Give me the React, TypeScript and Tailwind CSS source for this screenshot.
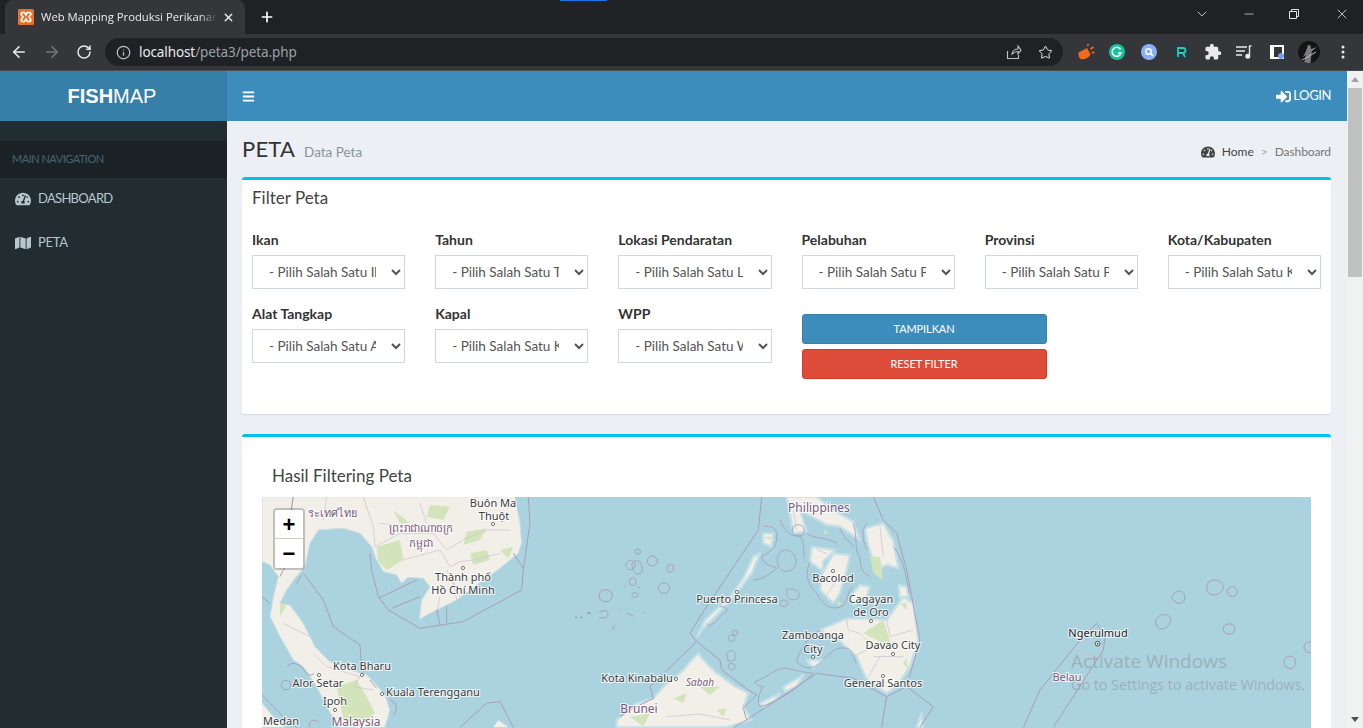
import React from "react";
import { ArrowLeft, ArrowRight, RotateCw, Info, Star, Plus, X, Minus, ChevronDown } from "lucide-react";
import { FaBars, FaMap, FaTachometerAlt, FaSignInAlt } from "react-icons/fa";
import { MdExtension } from "react-icons/md";

const Ctl = ({ label, opt }: { label: string; opt: string }) => (
  <div className="flex flex-col">
    <label className="text-[14px] leading-[20px] font-bold text-[#333] mb-[5px]">{label}</label>
    <select className="h-[34px] w-full border border-[#d2d6de] bg-white pl-[12px] pr-[12px] text-[13.5px] text-[#555] outline-none text-center" defaultValue={opt}>
      <option>{opt}</option>
    </select>
  </div>
);

const Lbl = ({ x, y, t, c = "#3c3c3c", s = 11, i = false }: { x: number; y: number; t: string; c?: string; s?: number; i?: boolean }) => (
  <text x={x} y={y} textAnchor="middle" dominantBaseline="middle" fontSize={s} fontStyle={i ? "italic" : "normal"} fill={c} stroke="#ffffff" strokeOpacity={0.75} strokeWidth={2.2} className="[paint-order:stroke] [font-family:'Noto_Sans','Noto_Sans_CJK_SC',sans-serif]">{t}</text>
);

const B = "#a99cba";
const A = "#cdbccb";

function MapArt() {
  return (
    <svg viewBox="262 497 1049 231" className="block w-[1049px] h-[231px] bg-[#aad3df]">
      <g transform="translate(260 490) scale(0.3333)" fill="none" strokeLinejoin="round" className="blur-[0.45px]">
        <path fill="#f2efe9" stroke="#c6dde2" strokeWidth="3" d="M6,20 L765,20 L780,100 L785,160 L775,190 L720,235 L650,285 L590,330 L510,370 L478,388 L485,330 L510,290 L490,265 L445,262 L425,280 L410,255 L370,245 L345,200 L335,170 L300,130 L250,115 L175,120 L150,160 L135,230 L105,265 L80,300 L60,340 L90,345 L130,400 L165,470 L210,515 L270,540 L320,555 L345,580 L375,615 L390,660 L375,712 L240,712 L205,660 L170,590 L130,530 L100,510 L60,440 L30,380 L40,320 L55,260 L30,225 L6,215Z" />
        <path fill="#f2efe9" d="M6,640 L40,680 L75,712 L6,712Z M700,712 L715,690 L745,712Z" />
        <path fill="#d3e4bb" d="M350,170 L420,150 L430,210 L380,240 L355,215Z M510,45 L570,50 L550,90 L500,80Z M620,125 L680,115 L660,150 L610,165Z M630,190 L680,180 L690,210 L640,225Z M720,180 L760,170 L745,205Z M230,590 L290,570 L320,620 L345,670 L300,712 L250,690Z M60,340 L80,345 L60,380Z M400,60 L450,100 L420,100Z" />
        <path stroke={A} strokeWidth="2" d="M310,20 L340,110 L345,170 L420,130 L520,130 L560,180 L610,150 L680,120 L750,120 M430,210 L540,180 L570,230 L600,215 M100,20 L90,100 L130,120 M60,240 L90,140 L100,60 M600,215 L640,210 L720,190 M200,20 L190,90 M480,40 L500,100 M160,490 L200,530 L300,560 L280,590 L340,600 M110,270 L190,350 M70,400 L150,440 M360,100 L470,110 M560,240 L600,320 M530,370 L540,320 M590,330 L580,270" />
        <path stroke={B} strokeWidth="3" d="M130,250 L190,330 L220,410 L300,465 L305,540 M330,190 L335,240 L355,320 L385,360 L480,415 L610,395 L785,300 L790,240 L810,100 L805,20 M355,325 L470,270 M395,355 L480,320 M540,405 L530,360 M560,400 L560,350 M6,615 L80,690 L110,712 M600,712 L680,640 L720,635 L760,712 M760,190 L790,235 M6,320 L30,340 M110,280 L125,255 M100,20 L95,50 L75,230 L60,260" />
        <path stroke={B} strokeWidth="3" d="M64,585 a14,14 0 1,0 28,0 a14,14 0 1,0 -28,0 M1017,317 a20,18 0 1,1 40,0 a20,18 0 1,1 -40,0 M1018,367 c20,-10 30,-5 25,10 c-5,8 -15,8 -25,5 M82,530 c15,-20 40,-5 50,10 c10,15 20,20 30,10 M150,712 c-10,-15 15,-30 25,-15 M330,570 l20,25 M390,630 c20,5 25,30 10,45 M1058,420 l6,-14" />
        <path fill="#9c8fb0" d="M945,380 h6 v4 h-6Z M962,380 h6 v4 h-6Z M982,367 h10 v4 h-10Z" />
      </g>
      <g transform="translate(620 490) scale(0.3333)" fill="none" strokeLinejoin="round" className="blur-[0.45px]">
        <path stroke="#c4e0e6" strokeWidth="7" fill="#f2efe9" d="M-10,690 L50,640 L100,625 L130,590 L190,540 L215,510 L235,490 L250,510 L285,545 L340,585 L385,610 L370,650 L395,690 L320,712 L-10,712Z" />
        <path stroke="#c4e0e6" strokeWidth="7" fill="#f2efe9" d="M232,440 L255,390 L330,320 L370,265 L400,200 L420,190 L395,250 L350,310 L290,375 L245,420Z M428,130 L460,130 L455,170 L430,160Z" />
        <path stroke="#c4e0e6" strokeWidth="7" fill="#f2efe9" d="M500,20 L520,130 L560,125 L540,60 L620,105 L660,110 L720,150 L700,95 L640,60 L590,20Z M575,170 L645,180 L610,215 L600,300 L640,340 L660,310 L680,240 L690,195 L640,190 L610,245 L570,215Z M735,115 L790,100 L820,150 L835,235 L800,225 L770,240 L745,170Z M690,320 L720,285 L750,290 L740,320 L700,345Z M835,285 L860,290 L865,320 L840,325Z" />
        <path stroke="#c4e0e6" strokeWidth="7" fill="#f2efe9" d="M600,420 L680,385 L750,385 L800,390 L850,320 L880,340 L895,450 L870,530 L830,590 L800,610 L740,570 L710,500 L655,450Z M560,510 L610,510 L580,535Z M420,640 L480,610 L465,630 L430,650Z M490,590 L550,555 L530,590 L495,605Z M890,712 L905,670 L908,712Z" />
        <path fill="#d3e4bb" d="M160,625 L200,610 L190,640Z M290,660 L320,655 L310,680Z M240,590 L300,590 L270,615Z M30,680 L90,670 L70,710Z M750,200 L780,200 L790,270 L760,250Z M730,430 L790,390 L815,470 L770,450Z M850,520 L860,505 L865,540Z M650,330 L665,340 L655,350Z M840,340 L860,340 L860,360Z M610,120 L625,125 L615,135Z M430,140 L455,140 L450,150Z" />
        <path stroke={A} strokeWidth="2" d="M680,385 L685,420 L720,430 L760,470 L700,500 M800,390 L810,440 L880,420 M760,500 L850,500 M740,570 L780,500 M610,330 L650,270 M590,180 L620,190 M780,110 L790,200 M520,60 L530,120 M140,680 L240,672 L330,690" />
        <path stroke={B} strokeWidth="3" d="M425,20 L415,120 L240,380 L210,430 L230,455 L90,590 L100,625 M230,455 L300,510 L305,540 L385,600 L410,615 L370,655 L380,690 L590,550 L700,565 L800,620 L860,590 L940,650 L900,712 M800,620 L785,712 M760,20 L790,90 L830,130 L860,240 L900,450 L860,590 M380,690 L340,712 M100,625 L30,660 L0,680" />
        <path stroke={B} strokeWidth="2.6" d="M435,110 C460,105 475,120 470,150 C465,180 440,190 425,200 C430,230 460,225 470,235 C440,260 420,270 400,270 M490,180 C520,175 535,210 525,230 C505,255 475,245 472,215 C470,195 480,185 490,180 M500,300 C520,290 545,305 535,325 C520,335 495,330 500,300 M480,340 a12,10 0 1,0 24,0 a12,10 0 1,0 -24,0 M535,140 a18,18 0 1,0 -1,0 M480,90 C500,130 510,140 540,135 C560,170 545,200 555,205 M570,215 C550,260 570,290 590,310 C610,350 640,365 670,345 C690,325 680,300 700,290 M700,100 C715,150 700,180 720,200 C720,240 730,250 750,260 M820,170 C860,220 860,290 870,310 M600,420 C560,440 530,500 530,515 C550,540 590,540 610,510 C640,480 650,470 680,475 C700,480 700,510 710,520 M405,575 C450,560 470,530 500,535 L545,545 L580,550 M405,575 C410,590 430,590 430,590 C415,610 410,640 420,650 C470,640 540,590 580,550 M320,490 C340,470 350,490 345,510 L325,515Z M325,530 a10,10 0 1,0 20,0 a10,10 0 1,0 -20,0 M325,445 a10,10 0 1,0 20,0 a10,10 0 1,0 -20,0 M337,428 a8,8 0 1,0 16,0 a8,8 0 1,0 -16,0 M260,400 C270,420 290,390 310,370 C330,360 320,350 300,350 M660,115 C680,160 690,150 700,170 M560,130 C590,150 620,140 650,160 M740,100 C720,130 730,160 745,180" />
        <path stroke={B} strokeWidth="2.8" d="M45,185 a8,8 0 1,0 16,0 a8,8 0 1,0 -16,0 M82,213 a15,15 0 1,0 30,0 a15,15 0 1,0 -30,0 M18,225 a14,14 0 1,0 28,0 a14,14 0 1,0 -28,0 M36,220 c15,-20 35,0 30,25 c-10,15 -30,5 -30,-25 M141,235 a10,12 0 1,0 20,0 a10,12 0 1,0 -20,0 M28,275 a10,12 0 1,0 20,0 a10,12 0 1,0 -20,0 M115,295 a17,16 0 1,0 34,0 a17,16 0 1,0 -34,0 M35,315 a10,7 0 1,0 20,0 a10,7 0 1,0 -20,0 M52,290 l10,5 M14,285 l4,5 M20,370 l20,8 M70,368 h5 M0,360 h5" />
      </g>
      <g transform="translate(990 490) scale(0.3333)" fill="none" strokeLinejoin="round" className="blur-[0.3px]">
        <path stroke={B} strokeWidth="3" d="M100,712 L150,600 L270,450 L320,400 L345,440 L340,480 L190,712 M545,325 C550,305 575,290 585,320 C585,340 560,350 545,325 M650,290 C650,265 700,260 700,295 C690,320 650,325 650,290 M712,305 a15,15 0 1,0 30,0 a15,15 0 1,0 -30,0 M497,395 C500,370 540,365 543,390 C535,425 497,425 497,395 M700,417 a17,15 0 1,0 35,0 a17,15 0 1,0 -35,0 M883,517 a17,15 0 1,0 33,0 a17,15 0 1,0 -33,0 M963,455 C935,455 935,490 963,487" />
        <path stroke={A} strokeWidth="2" d="M250,480 L320,500 M200,540 L225,560 M280,450 L330,470 M295,490 L310,510" />
        <circle cx="323" cy="461" r="7" fill="#fff" stroke="#333" strokeWidth="2.5" />
        <circle cx="323" cy="461" r="2.5" fill="#333" />
      </g>
      <g fill="#fff" stroke="#555" strokeWidth="0.8">
        <circle cx="493" cy="524" r="1.6" /><circle cx="463" cy="568" r="1.6" /><circle cx="362" cy="675" r="1.6" /><circle cx="319" cy="675" r="1.6" /><circle cx="335" cy="710" r="1.6" /><circle cx="382" cy="694" r="1.6" />
        <circle cx="737" cy="592" r="1.6" /><circle cx="833" cy="571" r="1.6" /><circle cx="871" cy="621" r="1.6" /><circle cx="813" cy="657" r="1.6" /><circle cx="893" cy="654" r="1.6" /><circle cx="883" cy="676" r="1.6" /><circle cx="676" cy="679" r="1.6" />
      </g>
      <Lbl x={493} y={504} t="Buôn Ma" /><Lbl x={494} y={517} t="Thuột" />
      <Lbl x={463} y={578} t="Thành phố" /><Lbl x={463} y={591} t="Hồ Chí Minh" />
      <Lbl x={362} y={667} t="Kota Bharu" /><Lbl x={318} y={684} t="Alor Setar" /><Lbl x={335} y={702} t="Ipoh" />
      <Lbl x={433} y={693} t="Kuala Terengganu" /><Lbl x={281} y={722} t="Medan" />
      <Lbl x={356} y={723} t="Malaysia" c="#7a5a80" s={12} />
      <Lbl x={332} y={514} t="ระเทศไทย" c="#7a5a80" /><Lbl x={421} y={529} t="ព្រះរាជាណាចក្រ" c="#7a5a80" /><Lbl x={421} y={544} t="កម្ពុជា" c="#7a5a80" />
      <Lbl x={819} y={509} t="Philippines" c="#7a5a80" s={12} />
      <Lbl x={737} y={600} t="Puerto Princesa" /><Lbl x={833} y={579} t="Bacolod" />
      <Lbl x={871} y={600} t="Cagayan" /><Lbl x={871} y={613} t="de Oro" />
      <Lbl x={813} y={636} t="Zamboanga" /><Lbl x={813} y={650} t="City" />
      <Lbl x={893} y={646} t="Davao City" /><Lbl x={883} y={684} t="General Santos" />
      <Lbl x={637} y={679} t="Kota Kinabalu" /><Lbl x={700} y={683} t="Sabah" c="#7a5a80" s={10} i />
      <Lbl x={639} y={710} t="Brunei" c="#7a5a80" s={12} />
      <Lbl x={1098} y={634} t="Ngerulmud" c="#222" /><Lbl x={1067} y={678} t="Belau" c="#7a5a80" />
    </svg>
  );
}

export default function App() {
  return (
    <div className="relative h-[728px] w-[1363px] overflow-hidden bg-[#ecf0f5] [font-family:Lato,'Noto_Sans',sans-serif]">
      {/* browser chrome */}
      <div className="relative h-[34px] bg-[#202124] flex items-end pl-[5px] [font-family:'Open_Sans',sans-serif]">
        <div className="absolute left-[560px] top-0 h-[1px] w-[47px] bg-[#1a73e8]" />
        <div className="h-[34px] w-[240px] bg-[#35363a] rounded-t-[8px] flex items-center pl-[12px] pr-[10px]">
          <svg width="18" height="18" viewBox="0 0 18 18" className="shrink-0 mr-[6px]">
            <rect width="16" height="16" x="1" y="1" rx="1.5" fill="#e8702a" />
            <path d="M5 4.5h2.5L9 7l1.500-2.500H13l1 1.500-2 3 2 3-1 1.500h-2.500L9 11l-1.500 2.500H5L4 12l2-3-2-3z" fill="none" stroke="#fff" strokeWidth="1.600" />
          </svg>
          <span className="text-[11.3px] text-[#e8eaed] whitespace-nowrap overflow-hidden w-[176px] [mask-image:linear-gradient(to_right,black_90%,transparent)]">Web Mapping Produksi Perikanan</span>
          <X size={13} strokeWidth={2.5} className="text-[#e8eaed] ml-auto" />
        </div>
        <Plus size={16} strokeWidth={2.5} className="text-white ml-[14px] mb-[9px]" />
        <div className="ml-auto flex items-center h-[34px] pb-[6px] text-[#e4e4e6]">
          <ChevronDown size={16} strokeWidth={1.2} className="mr-[32px]" />
          <Minus size={14} strokeWidth={1.2} className="mr-[32px]" />
          <svg width="12" height="12" viewBox="0 0 12 12" fill="none" stroke="currentColor" className="mr-[34px]"><path d="M1.5 3.5h7v7h-7z M3.5 3.500v-2h7v7h-2" /></svg>
          <X size={16} strokeWidth={1.2} className="mr-[13px]" />
        </div>
      </div>
      <div className="h-[36px] bg-[#35363a] flex items-center border-b border-[#494c50] box-content">
        <ArrowLeft size={18} strokeWidth={2.2} className="text-[#e8eaed] ml-[10px]" />
        <ArrowRight size={18} strokeWidth={2.2} className="text-[#75777a] ml-[15px]" />
        <RotateCw size={16} strokeWidth={2.2} className="text-[#e8eaed] ml-[15px]" />
        <div className="ml-[13px] h-[28px] w-[958px] rounded-full bg-[#202124] flex items-center pl-[11px] pr-[9px]">
          <Info size={15} className="text-[#bdc1c6]" />
          <span className="ml-[8px] text-[13.5px] text-[#e8eaed] [font-family:'Noto_Sans',sans-serif] tracking-[-0.1px]">localhost<span className="text-[#9aa0a6]">/peta3/peta.php</span></span>
          <svg width="16" height="16" viewBox="0 0 16 16" fill="none" stroke="#bdc1c6" strokeWidth="1.100" className="ml-auto mr-[16px]"><path d="M1.500 7v7.500h11V11 M6 10c.3-3 3-5 6-5V2l3 4.200-3 3.800V7.500C9.500 7.500 7.500 8.500 6 10z" /></svg>
          <Star size={15} strokeWidth={1.6} className="text-[#e8eaed] mr-[1px]" />
        </div>
        <div className="flex items-center ml-[14px]">
          <svg width="18" height="18" viewBox="0 0 18 18"><path d="M1.500 9.500 10 5l3.500 6.500c-2 4-8 6-10.500 4-1.500-1.500-1.500-4-1.500-6z" fill="#f26a1b" /><path d="M10.500 3l1-2.300M13.500 6l3-2M14.500 9.500h3" stroke="#f26a1b" strokeWidth="1.600" /></svg>
          <svg width="16" height="16" viewBox="0 0 16 16" className="ml-[14px]"><circle cx="8" cy="8" r="8" fill="#15c39a" /><path d="M11.500 5.500A4.500 4.500 0 1 0 12 9H9" fill="none" stroke="#fff" strokeWidth="1.500" /></svg>
          <svg width="16" height="16" viewBox="0 0 16 16" className="ml-[16px]"><circle cx="8" cy="8" r="8" fill="#8ab0f5" /><circle cx="7.500" cy="7.500" r="2.800" fill="none" stroke="#fff" strokeWidth="1.500" /><path d="M9.500 9.500l2.500 2.500" stroke="#fff" strokeWidth="1.500" /></svg>
          <svg width="16" height="16" viewBox="0 0 16 16" className="ml-[16px]"><rect width="16" height="16" fill="#263a44" /><path d="M5 13V4h5a2.200 2.200 0 0 1 0 5H5m5 0l2 4" fill="none" stroke="#36c7ad" strokeWidth="1.800" /></svg>
          <MdExtension size={18} className="text-[#e8eaed] ml-[15px]" />
          <svg width="16" height="16" viewBox="0 0 16 16" fill="none" stroke="#e8eaed" strokeWidth="1.400" className="ml-[14px]"><path d="M0 3h11M0 7h9M0 11h6" /><path d="M13.500 1.500v10" /><circle cx="11.800" cy="12.300" r="1.800" fill="#e8eaed" /><path d="M13.500 2h2" /></svg>
          <svg width="14" height="14" viewBox="0 0 14 14" className="ml-[18px]"><rect width="14" height="14" fill="#fff" /><rect x="4" y="2" width="8" height="10" fill="#35363a" /><circle cx="11" cy="11" r="3" fill="#6ea2e8" /></svg>
          <div className="ml-[14px] h-[22px] w-[22px] rounded-full bg-[#141414] overflow-hidden">
            <svg width="22" height="22" viewBox="0 0 22 22"><path d="M10 4l2.500.5.500 3.500 6-2-5 4-.5 3-1 9H6l2-8-3 2 3-6z" fill="#7d7d7d" /><path d="M4 19l14-8" stroke="#bcbcbc" strokeWidth="1" /></svg>
          </div>
          <svg width="4" height="14" viewBox="0 0 4 14" fill="#e8eaed" className="ml-[21px]"><circle cx="2" cy="2" r="1.500" /><circle cx="2" cy="7" r="1.500" /><circle cx="2" cy="12" r="1.500" /></svg>
        </div>
      </div>

      {/* page */}
      <div className="flex h-[657px]">
        <aside className="w-[227px] shrink-0 bg-[#222d32] flex flex-col">
          <div className="h-[50px] bg-[#367fa9] flex items-center justify-center pr-[3px] text-[20px] text-white [font-family:'Liberation_Sans',sans-serif]">
            <b>FISH</b><span>MAP</span>
          </div>
          <div className="mt-[20px] h-[37px] bg-[#1a2226] flex items-center pl-[12px] text-[11px] tracking-[-0.5px] text-[#4b646f]">MAIN NAVIGATION</div>
          <div className="h-[44px] flex items-center pb-[2px] pl-[15px] text-[13px] tracking-[-0.7px] text-[#b8c7ce]"><FaTachometerAlt size={16} className="mr-[7px]" />DASHBOARD</div>
          <div className="h-[44px] flex items-center pb-[2px] pl-[15px] text-[13px] tracking-[-0.3px] text-[#b8c7ce]"><FaMap size={16} className="mr-[7px]" />PETA</div>
        </aside>
        <div className="flex-1 min-w-0 flex flex-col">
          <div className="h-[50px] shrink-0 bg-[#3c8dbc] flex items-center justify-between pl-[15px] pr-[16px] text-white">
            <FaBars size={13} />
            <span className="flex items-center text-[13px] tracking-[-0.4px]"><FaSignInAlt size={15} className="mr-[2px]" />LOGIN</span>
          </div>
          <div className="pl-[15px] pr-[16px] h-[56px] shrink-0 flex items-start justify-between pt-[12px]">
            <div className="flex items-baseline text-[#333]">
              <span className="text-[22px] leading-[32px] tracking-[0.2px]">PETA</span>
              <span className="ml-[9px] text-[13.5px] text-[#8a949c]">Data Peta</span>
            </div>
            <div className="flex items-center text-[12px] text-[#444] pt-[10px]">
              <FaTachometerAlt size={14} className="mr-[7px]" />Home<span className="mx-[7px] text-[#aaa]">&gt;</span><span className="text-[#777] tracking-[-0.1px]">Dashboard</span>
            </div>
          </div>
          <div className="ml-[15px] mr-[16px] h-[237px] shrink-0 bg-white border-t-[3px] border-[#00c0ef] rounded-[3px] shadow-[0_1px_1px_rgba(0,0,0,0.1)] px-[10px]">
            <div className="text-[17px] leading-[20px] text-[#444] mt-[8px]">Filter Peta</div>
            <div className="grid grid-cols-6 gap-x-[30px] gap-y-[15px] mt-[22px] items-start">
              <Ctl label="Ikan" opt="- Pilih Salah Satu Ikan -" />
              <Ctl label="Tahun" opt="- Pilih Salah Satu Tahun -" />
              <Ctl label="Lokasi Pendaratan" opt="- Pilih Salah Satu Lokasi -" />
              <Ctl label="Pelabuhan" opt="- Pilih Salah Satu Pelabuhan -" />
              <Ctl label="Provinsi" opt="- Pilih Salah Satu Provinsi -" />
              <Ctl label="Kota/Kabupaten" opt="- Pilih Salah Satu Kota -" />
              <Ctl label="Alat Tangkap" opt="- Pilih Salah Satu Alat -" />
              <Ctl label="Kapal" opt="- Pilih Salah Satu Kapal -" />
              <Ctl label="WPP" opt="- Pilih Salah Satu WPP -" />
              <div className="w-[245px] flex flex-col gap-[5px] pt-[10px]">
                <button className="h-[30px] rounded-[3px] bg-[#3c8dbc] border border-[#367fa9] text-white text-[11px] tracking-[-0.1px]">TAMPILKAN</button>
                <button className="h-[30px] rounded-[3px] bg-[#dd4b39] border border-[#d73925] text-white text-[11px] tracking-[-0.1px]">RESET FILTER</button>
              </div>
            </div>
          </div>
          <div className="ml-[15px] mr-[16px] mt-[20px] flex-1 min-h-0 overflow-hidden bg-white border-t-[3px] border-[#00c0ef] rounded-t-[3px] px-[20px]">
            <div className="text-[17px] leading-[20px] text-[#444] pl-[10px] mt-[29px] mb-[11px]">Hasil Filtering Peta</div>
            <div className="relative">
              <MapArt />
              <div className="absolute left-[11px] top-[11px] w-[32px] rounded-[4px] border-2 border-black/20 bg-clip-padding [font-family:'Liberation_Sans',sans-serif]">
                <div className="h-[29px] bg-white rounded-t-[2px] border-b border-[#ccc] flex items-center justify-center text-[22px] font-bold text-black">+</div>
                <div className="h-[29px] bg-white rounded-b-[2px] flex items-center justify-center text-[22px] font-bold text-black">−</div>
              </div>
            </div>
          </div>
        </div>
        <div className="w-[16px] shrink-0 bg-[#f1f1f1] flex flex-col items-center justify-between relative">
          <div className="w-[14px] flex flex-col items-center">
            <div className="mt-[6px] h-0 w-0 border-x-[4px] border-b-[5px] border-x-transparent border-b-[#a3a3a3]" />
            <div className="mt-[6px] h-[189px] w-[14px] bg-[#c1c1c1]" />
          </div>
          <div className="mb-[6px] h-0 w-0 border-x-[4px] border-t-[5px] border-x-transparent border-t-[#505050]" />
        </div>
      </div>

      {/* Activation watermark */}
      <div className="absolute left-[1071px] top-[648px] text-[#8d8d8d]/50 [font-family:'Open_Sans',sans-serif] pointer-events-none">
        <div className="text-[19px] leading-[27px]">Activate Windows</div>
        <div className="text-[14.3px] leading-[20px] whitespace-nowrap">Go to Settings to activate Windows.</div>
      </div>
    </div>
  );
}
